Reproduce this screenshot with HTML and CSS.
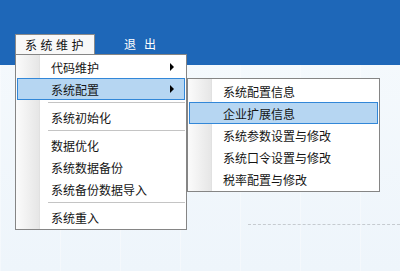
FILE: index.html
```html
<!DOCTYPE html>
<html lang="zh">
<head>
<meta charset="utf-8">
<link rel="stylesheet" href="styles.css">
</head>
<body>
<div class="page">
  <div class="header">
    <div class="menubar">
      <div class="bar-item open">系统维护</div>
      <div class="bar-item exit">退出</div>
    </div>
  </div>
  <div class="content">
    <div class="dash"></div>
  </div>

  <div class="menu main-menu">
    <div class="item"><span>代码维护</span><i class="arrow"></i></div>
    <div class="item active"><span>系统配置</span><i class="arrow"></i></div>
    <div class="sep"></div>
    <div class="item"><span>系统初始化</span></div>
    <div class="sep"></div>
    <div class="item"><span>数据优化</span></div>
    <div class="item"><span>系统数据备份</span></div>
    <div class="item"><span>系统备份数据导入</span></div>
    <div class="sep"></div>
    <div class="item"><span>系统重入</span></div>
  </div>

  <div class="menu sub-menu">
    <div class="item"><span>系统配置信息</span></div>
    <div class="item active"><span>企业扩展信息</span></div>
    <div class="item"><span>系统参数设置与修改</span></div>
    <div class="item"><span>系统口令设置与修改</span></div>
    <div class="item"><span>税率配置与修改</span></div>
  </div>
</div>
</body>
</html>
```

FILE: styles.css
```css
* { box-sizing: border-box; }
html, body { margin: 0; padding: 0; }
body {
  width: 400px;
  height: 271px;
  overflow: hidden;
  font-family: "Noto Sans CJK SC", "Microsoft YaHei", sans-serif;
  font-size: 12px;
  color: #141414;
  background:
    linear-gradient(to right, rgba(255,255,255,0.35) 1px, transparent 1px) 0 0 / 60px 60px,
    linear-gradient(to bottom, #f6fafd 0%, #eef5fb 100%);
}
.page { position: relative; width: 400px; height: 271px; }

.header {
  height: 65px;
  background: #1e67b8;
}
.menubar {
  display: flex;
  align-items: flex-start;
  padding: 34px 0 0 15px;
}
.bar-item {
  height: 20px;
  line-height: 20px;
  font-size: 12px;
}
.bar-item.open {
  width: 80px;
  padding-left: 9px;
  background: #f8f8f8;
  border: 1px solid #8a8a8a;
  border-bottom: none;
  letter-spacing: 3.5px;
  color: #111;
}
.bar-item.exit {
  margin-left: 29px;
  color: #ffffff;
  letter-spacing: 8px;
}

.content {
  padding-top: 159px;
  padding-left: 248px;
}
.dash {
  border-top: 1px dashed #c6cbd0;
}

.menu {
  position: absolute;
  background:
    linear-gradient(to right, #fbfbfb 0, #e6e6e6 23px, #dcdcdc 24px, #ffffff 24px);
  background-origin: padding-box;
  border: 1px solid #858585;
  padding: 1px;
}
.main-menu {
  left: 15px;
  top: 54px;
  width: 172px;
}
.sub-menu {
  left: 187px;
  top: 78px;
  width: 193px;
}
.item {
  display: flex;
  align-items: center;
  justify-content: space-between;
  height: 22px;
  padding: 0 10px 0 33px;
  border: 1px solid transparent;
  white-space: nowrap;
}
.item.active {
  background: #b6d6f2;
  border-color: #3287d8;
}
.arrow {
  width: 0;
  height: 0;
  border-top: 4px solid transparent;
  border-bottom: 4px solid transparent;
  border-left: 4px solid #000;
}
.sep {
  height: 6px;
  margin-left: 31px;
  background: linear-gradient(#c4c4c4, #c4c4c4) 0 2px / 100% 1px no-repeat;
}
```
